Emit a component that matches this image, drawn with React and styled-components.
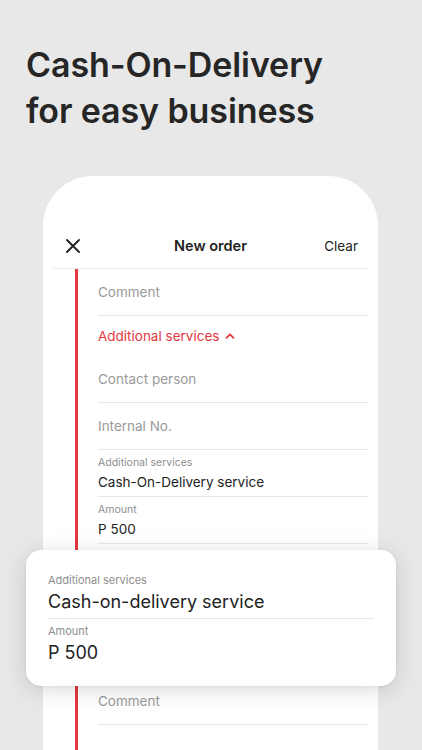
import React from 'react'
import styled, { createGlobalStyle } from 'styled-components'

const GlobalStyle = createGlobalStyle`
  * { box-sizing: border-box; }
  html, body {
    margin: 0;
    padding: 0;
    background: #e8e8e8;
    font-family: Inter, "Noto Sans", sans-serif;
  }
`;

const rows = [
  { type: 'placeholder', text: 'Comment' },
  { type: 'section', text: 'Additional services' },
  { type: 'placeholder', text: 'Contact person' },
  { type: 'placeholder', text: 'Internal No.' },
  { type: 'value', label: 'Additional services', text: 'Cash-On-Delivery service' },
  { type: 'value', label: 'Amount', text: 'P 500' },
  { type: 'spacer' },
  { type: 'placeholder', text: 'Comment' },
]

const ChevronUp = () => (
  <svg width="10" height="10" viewBox="0 0 10 10" fill="none">
    <path d="M1.5 6.8 L5 3.3 L8.5 6.8" stroke="#e5383f" strokeWidth="1.8" strokeLinecap="round" strokeLinejoin="round" />
  </svg>
)

const CloseIcon = () => (
  <svg width="16" height="16" viewBox="0 0 16 16" fill="none">
    <path d="M2 2 L14 14 M14 2 L2 14" stroke="#222" strokeWidth="1.9" strokeLinecap="round" />
  </svg>
)

const App = () => {
  return (
    <Page>
      <GlobalStyle />
      <Heading>
        Cash-On-Delivery
        <br />
        for easy business
      </Heading>
      <Phone>
        <Header>
          <CloseButton><CloseIcon /></CloseButton>
          <HeaderTitle>New order</HeaderTitle>
          <ClearButton>Clear</ClearButton>
        </Header>
        <Body>
          <RedLine />
          <Fields>
            {rows.map((r, i) => {
              if (r.type === 'section') {
                return (
                  <Section key={i}>
                    {r.text} <ChevronUp />
                  </Section>
                )
              }
              if (r.type === 'spacer') return <Spacer key={i} />
              if (r.type === 'value') {
                return (
                  <Field key={i}>
                    <FieldLabel>{r.label}</FieldLabel>
                    <FieldValue>{r.text}</FieldValue>
                  </Field>
                )
              }
              return (
                <Field key={i}>
                  <Placeholder>{r.text}</Placeholder>
                </Field>
              )
            })}
          </Fields>
        </Body>
        <Popup>
          <PopupField>
            <PopupLabel>Additional services</PopupLabel>
            <PopupValue>Cash-on-delivery service</PopupValue>
          </PopupField>
          <PopupField last>
            <PopupLabel>Amount</PopupLabel>
            <PopupValue>P 500</PopupValue>
          </PopupField>
        </Popup>
      </Phone>
    </Page>
  )
}

export default App

const Page = styled.div`
  height: 750px;
  overflow: hidden;
  background: #e8e8e8;
  display: flex;
  flex-direction: column;
`;

const Heading = styled.h1`
  margin: 0;
  padding: 42px 0 0 26px;
  font-size: 34px;
  line-height: 46px;
  font-weight: 600;
  color: #262626;
  letter-spacing: -0.1px;
`;

const Phone = styled.div`
  position: relative;
  margin: 42px 0 0 43px;
  width: 335px;
  flex: 1;
  display: flex;
  flex-direction: column;
  background: #fff;
  border-radius: 50px 50px 0 0;
  padding-top: 47px;
`;

const Header = styled.div`
  margin: 0 10px;
  height: 46px;
  flex-shrink: 0;
  display: flex;
  align-items: center;
  justify-content: space-between;
  padding: 0 10px 0 12px;
  border-bottom: 1px solid #ebebeb;
  position: relative;
`;

const CloseButton = styled.div`
  display: flex;
  width: 16px;
  height: 16px;
`;

const HeaderTitle = styled.div`
  position: absolute;
  left: 0;
  right: 0;
  text-align: center;
  font-size: 14.5px;
  font-weight: 600;
  color: #222;
  pointer-events: none;
`;

const ClearButton = styled.div`
  font-size: 13.5px;
  color: #222;
`;

const Body = styled.div`
  flex: 1;
  display: flex;
  padding-left: 32px;
  padding-right: 10px;
`;

const RedLine = styled.div`
  width: 3px;
  background: #e5383f;
  flex-shrink: 0;
  margin-right: 20px;
`;

const Fields = styled.div`
  flex: 1;
  display: flex;
  flex-direction: column;
`;

const Field = styled.div`
  height: 47px;
  flex-shrink: 0;
  border-bottom: 1px solid #e8e8e8;
  display: flex;
  flex-direction: column;
  justify-content: center;
`;

const Placeholder = styled.div`
  font-size: 13.5px;
  line-height: 18px;
  color: #9a9a9a;
`;

const Section = styled.div`
  height: 40px;
  flex-shrink: 0;
  display: flex;
  align-items: center;
  gap: 6px;
  font-size: 13.5px;
  color: #e5383f;
`;

const Spacer = styled.div`
  height: 134px;
  flex-shrink: 0;
`;

const FieldLabel = styled.div`
  font-size: 10.5px;
  line-height: 13px;
  color: #8e8e8e;
  margin-bottom: 4px;
`;

const FieldValue = styled.div`
  font-size: 13.5px;
  line-height: 18px;
  color: #222;
`;

const Popup = styled.div`
  position: absolute;
  top: 374px;
  left: -17px;
  width: 370px;
  height: 136px;
  background: #fff;
  border-radius: 15px;
  box-shadow: 0 4px 24px rgba(0, 0, 0, 0.14), 0 1px 4px rgba(0, 0, 0, 0.06);
  padding: 23px 22px 0 22px;
  display: flex;
  flex-direction: column;
`;

const PopupField = styled.div`
  padding: 0 0 ${p => (p.last ? '0' : '4px')};
  margin-bottom: 5px;
  border-bottom: ${p => (p.last ? 'none' : '1px solid #e8e8e8')};
`;

const PopupLabel = styled.div`
  font-size: 11px;
  line-height: 14px;
  color: #8e8e8e;
  margin-bottom: 3px;
`;

const PopupValue = styled.div`
  font-size: 18px;
  line-height: 24px;
  color: #222;
`;
